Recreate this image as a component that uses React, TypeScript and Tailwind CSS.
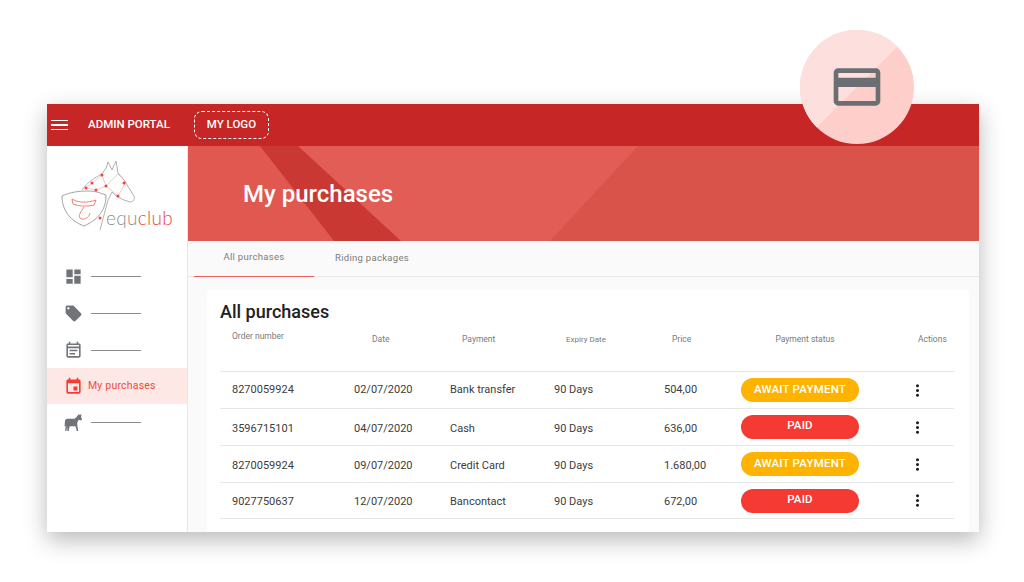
import { MdDashboard, MdLocalOffer, MdOutlineEventNote, MdEvent, MdOutlineCreditCard, MdMoreVert } from "react-icons/md";

const font = "font-['Roboto',sans-serif]";

const rows = [
  { order: "8270059924", date: "02/07/2020", pay: "Bank transfer", price: "504,00", paid: false, shift: "" },
  { order: "3596715101", date: "04/07/2020", pay: "Cash", price: "636,00", paid: true, shift: "pt-1" },
  { order: "8270059924", date: "09/07/2020", pay: "Credit Card", price: "1.680,00", paid: false, shift: "pt-1" },
  { order: "9027750637", date: "12/07/2020", pay: "Bancontact", price: "672,00", paid: true, shift: "pt-1" },
];

const Logo = () => (
  <svg viewBox="0 0 130 72" className="w-[130px] h-[72px]" fill="none">
    {/* shield */}
    <path d="M6 38 C14 34 24 33 32 33 C40 33 44 35 50 37 C50 48 46 60 28 68 C12 62 6 50 6 38Z" stroke="#9a9a9a" strokeWidth="0.9" />
    <path d="M16 41 C22 45 32 45 40 42 L38 47 C30 49 22 48 17 46Z" stroke="#f2706a" strokeWidth="0.9" />
    <path d="M28 49 C25 54 22 57 24 60 C27 63 33 60 34 55" stroke="#f2706a" strokeWidth="0.9" />
    {/* horse */}
    <path d="M26 32 C32 24 38 20 46 16 L50 10 L52 4 L56 12 L60 3 L62 15 L68 22 L78 38 C79 41 78 44 74 44 L68 42 L60 38 L56 34 L52 42 L44 72" stroke="#a8a8a8" strokeWidth="0.9" />
    <path d="M30 30 L46 17 L50 28 L62 16 M50 28 L62 38 M50 28 L40 32 L30 30 M62 16 L70 24 L62 38" stroke="#f2a19c" strokeWidth="0.6" />
    {[[30, 30], [36, 25], [46, 17], [50, 28], [62, 38], [40, 32], [68, 25], [44, 60]].map(([cx, cy]) => (
      <circle key={`${cx}-${cy}`} cx={cx} cy={cy} r="1.5" fill="#f0453e" />
    ))}
  </svg>
);

const HorseIcon = () => (
  <svg viewBox="0 0 20 20" className="w-[19px] h-[19px]" fill="#707479">
    <path d="M1 9 C1 7 2 6 4 6 L11 6 C12.5 5 14 3 15 2 L15.5 1 L16.5 2 L18.5 1 L18 4 L19 7 L17.5 8 L15.5 7 L14 10 L14 13 L15 19 L13.5 19 L12 14 L6 14 L5 19 L3.5 19 L3.5 14 L2.5 19 L1.2 19 L2 11 L1.5 14 L0.5 14Z" />
  </svg>
);

const NavLine = () => <span className="block w-[50px] h-px bg-[#8a8a8a]" />;

const NavItem = ({ icon, className }: { icon: React.ReactNode; className: string }) => (
  <div className={`flex items-center pl-[17px] ${className}`}>
    <span className="w-[19px] flex justify-center">{icon}</span>
    <span className="ml-[8px]"><NavLine /></span>
  </div>
);

const Badge = ({ paid }: { paid: boolean }) => (
  <div
    className={`w-[118px] h-[24px] rounded-full flex items-center justify-center text-white text-[11.5px] font-medium tracking-[0.2px] ${
      paid ? "bg-[#f43a33] pb-0.5" : "bg-[#fdb300]"
    }`}
  >
    {paid ? "PAID" : "AWAIT PAYMENT"}
  </div>
);

export default function App() {
  return (
    <div className={`relative w-[1024px] h-[582px] bg-white overflow-hidden pt-[104px] pl-[47px] ${font}`}>
      <div className="w-[932px] h-[428px] flex flex-col bg-[#fafafa] shadow-[0_8px_22px_rgba(0,0,0,0.28)] overflow-hidden">
        {/* Top bar */}
        <header className="h-[42px] shrink-0 bg-[#c62626] flex items-center text-white text-[11.5px] font-medium">
          <div className="ml-[4px] w-[17px] flex flex-col gap-[3px]">
            <span className="h-[1.5px] bg-white" />
            <span className="h-[1.5px] bg-white" />
            <span className="h-[1.5px] bg-white" />
          </div>
          <span className="ml-[20px]">ADMIN PORTAL</span>
          <div className="ml-[24px] w-[75px] h-[28px] rounded-lg border border-dashed border-white flex items-center justify-center">
            MY LOGO
          </div>
        </header>

        <div className="flex-1 flex min-h-0">
          {/* Sidebar */}
          <aside className="w-[141px] shrink-0 bg-white border-r border-[#e8e8e8] flex flex-col">
            <div className="relative h-[106px]">
              <div className="pl-[9px] pt-[12px]">
                <Logo />
              </div>
              <div className="absolute left-[59px] top-[58px] text-[19px] font-['Lato',sans-serif] font-light text-[#8f8f8f] tracking-[0.3px]">
                equ<span className="text-[#ee4a43]">club</span>
              </div>
            </div>
            <NavItem icon={<MdDashboard className="text-[#707479] text-[19px]" />} className="h-[37px] mt-[6px]" />
            <NavItem icon={<MdLocalOffer className="text-[#707479] text-[19px]" />} className="h-[37px]" />
            <NavItem icon={<MdOutlineEventNote className="text-[#707479] text-[19px]" />} className="h-[36px]" />
            <div className="h-[36px] bg-[#fee8e6] flex items-center pl-[17px]">
              <MdEvent className="text-[#f43a33] text-[19px]" />
              <span className="ml-[5px] text-[#ef4a43] text-[10.5px] tracking-[0.2px]">My purchases</span>
            </div>
            <NavItem icon={<HorseIcon />} className="h-[37px]" />
          </aside>

          {/* Main */}
          <main className="flex-1 min-w-0 flex flex-col">
            <section className="relative h-[95px] shrink-0 bg-[#e25d55] overflow-hidden flex items-center pl-[55px]">
              <svg viewBox="0 0 791 95" className="absolute inset-0 w-full h-full">
                <polygon points="0,0 72,0 146,95 0,95" fill="#e0584f" />
                <polygon points="450,0 791,0 791,95 362,95" fill="#d9534b" />
                <polygon points="72,0 110,0 213,95 146,95" fill="#c93832" />
              </svg>
              <h1 className="relative text-white text-[24px] font-medium">My purchases</h1>
            </section>

            {/* Tabs */}
            <div className="h-[36px] shrink-0 pl-[6px] flex border-b border-[#e8e8e8] text-[9.5px] text-[#7c7c7c] tracking-[0.3px]">
              <div className="w-[120px] h-[36px] flex items-center justify-center pb-0.5 border-b border-[#f0605a]">All purchases</div>
              <div className="ml-[21px] h-[36px] flex items-center pb-0.5">Riding packages</div>
            </div>

            {/* Card */}
            <div className="flex-1 min-h-0 pl-[19px] pr-[10px] pt-[13px]">
              <div className="h-full bg-white rounded-t pl-[13px] pr-[15px] pt-[11px]">
                <h2 className="text-[18px] leading-[21px] font-medium text-[#212121]">All purchases</h2>
                <div className="h-[49px] grid grid-cols-[134px_96px_104px_103px_77px_118px_1fr] text-[8.5px] text-[#7a7a7a] pl-[12px]">
                  <span className="pt-[8px]">Order number</span>
                  <span className="pt-[11px] pl-[6px]">Date</span>
                  <span className="pt-[11px]">Payment</span>
                  <span className="pt-[12px] text-[8px]">Expiry Date</span>
                  <span className="pt-[11px] pl-[3px]">Price</span>
                  <span className="pt-[11px] text-center">Payment status</span>
                  <span className="pt-[11px] pl-[54px]">Actions</span>
                </div>
                {rows.map((r, i) => (
                  <div
                    key={i}
                    className="h-[37px] grid grid-cols-[122px_96px_104px_110px_77px_118px_1fr] items-center border-t border-[#e6e6e6] last:border-b pl-[12px] text-[11px] text-[#3c3c3c] w-[734px]"
                  >
                    <span className={r.shift}>{r.order}</span>
                    <span className={r.shift}>{r.date}</span>
                    <span className={r.shift}>{r.pay}</span>
                    <span className={r.shift}>90 Days</span>
                    <span className={r.shift}>{r.price}</span>
                    <Badge paid={r.paid} />
                    <span className="flex justify-center pl-[22px]">
                      <MdMoreVert className="text-[#222] text-[19px]" />
                    </span>
                  </div>
                ))}
              </div>
            </div>
          </main>
        </div>
      </div>

      {/* Highlight circle */}
      <div className="absolute left-[800px] top-[30px] w-[114px] h-[114px] rounded-full bg-[#fecfca] overflow-hidden flex items-center justify-center">
        <svg viewBox="0 0 114 114" className="absolute inset-0 w-full h-full">
          <polygon points="0,0 97,0 97,17 14,100 0,100" fill="#fde0de" />
        </svg>
        <MdOutlineCreditCard className="relative text-[#6b6f74] text-[56px]" />
      </div>
    </div>
  );
}
